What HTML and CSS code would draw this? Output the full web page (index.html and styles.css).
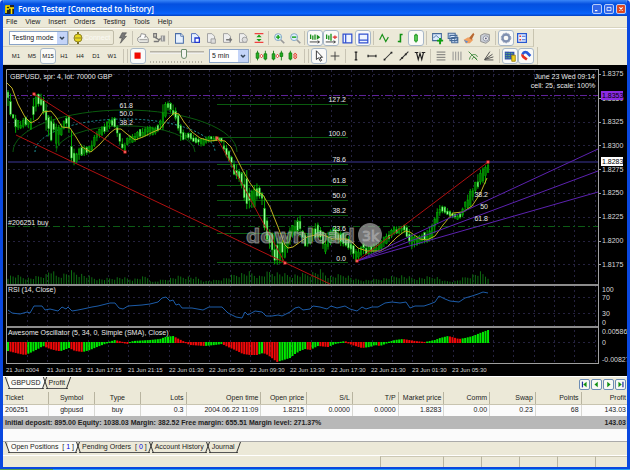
FILE: index.html
```
<!DOCTYPE html>
<html lang="en">

<head>
    <meta charset="UTF-8">
    <meta name="viewport" content="width=device-width, initial-scale=1.0">
    <title>Forex Tester [Connected to history]</title>
    <link rel="stylesheet" href="styles.css">
</head>

<body>
    <div class="window">
        <header class="titlebar">
            <svg class="logo" viewBox="0 0 9 9"><rect width="9" height="9" fill="#222"/><path d="M1 8V1h4M1 4h3M4 3h5M6.500 3v6" stroke="#ffe800" stroke-width="1.600" fill="none"/></svg>
            <h1 class="title">Forex Tester [Connected to history]</h1>
            <div class="win-btns">
                <button type="button" class="win-btn" aria-label="Minimize"><svg viewBox="0 0 10 10"><path d="M2.500 7h3" stroke="#fff" stroke-width="1.500"/></svg></button>
                <button type="button" class="win-btn" aria-label="Maximize"><svg viewBox="0 0 10 10"><path d="M2.500 3h5v4h-5z" stroke="#fff" fill="none"/></svg></button>
                <button type="button" class="win-btn close" aria-label="Close"><svg viewBox="0 0 10 10"><path d="M3 3l4 4M7 3l-4 4" stroke="#fff" stroke-width="1.400"/></svg></button>
            </div>
        </header>

        <nav class="menu">
            <button type="button">File</button>
            <button type="button">View</button>
            <button type="button">Insert</button>
            <button type="button">Orders</button>
            <button type="button">Testing</button>
            <button type="button">Tools</button>
            <button type="button">Help</button>
        </nav>

        <div class="toolbars">
            <div class="toolbar">
                <div class="combo mode">
                    <select aria-label="Mode"><option>Testing mode</option></select>
                    <svg viewBox="0 0 10 12"><path d="M3 5l2 2 2-2" stroke="#345" stroke-width="1.500" fill="none"/></svg>
                </div>
                <button type="button" class="connect" disabled>
                    <svg viewBox="0 0 12 14"><path d="M6 1v12" stroke="#776b20" stroke-width="2"/><circle cx="6" cy="7" r="4" fill="#e8d820" stroke="#91852a"/><path d="M2 7h8" stroke="#91852a"/></svg>
                    Connect
                </button>
                <button type="button" class="tool" aria-label="Quick connect"><svg viewBox="0 0 16 16"><path d="M7 2h5L9 6h3l-7 8 2-6H4z" fill="#777" stroke="#444" stroke-width=".6"/></svg></button>
                <span class="sep"></span>
                <button type="button" class="tool" aria-label="Open data"><svg viewBox="0 0 16 16"><path d="M2 8l3-2h7l2 3v4H4L2 11z" fill="#f2f2ee" stroke="#888"/><path d="M5 7l1-4 5 1-1 4M4 10h9" fill="#fff" stroke="#888"/></svg></button>
                <button type="button" class="tool" aria-label="Data feed"><svg viewBox="0 0 16 16"><path d="M2 3h3v4H2zM3 7l5 3M2 12h5l2-3h2" fill="none" stroke="#777" stroke-width="1.500"/><path d="M10 5h5v7h-5z" fill="#999"/><path d="M12 6v5" stroke="#ddd"/></svg></button>
                <span class="sep"></span>
                <button type="button" class="tool" aria-label="New chart"><svg viewBox="0 0 16 16"><path d="M4 3h6l3 3v8H4z" fill="#e6f1ff" stroke="#4a6ea8" stroke-width="1.200"/><path d="M10 3v3h3" fill="#fff" stroke="#4a6ea8"/></svg></button>
                <button type="button" class="tool" aria-label="Add chart"><svg viewBox="0 0 16 16"><path d="M4 3h5l3 3v7H4z" fill="#e6f1ff" stroke="#4060b8"/><path d="M8 8h5v5H8z" fill="#fff" stroke="#2038d0" stroke-width="1.500"/></svg></button>
                <button type="button" class="tool" aria-label="Save chart"><svg viewBox="0 0 16 16"><path d="M4 3h5l3 3v7H4z" fill="#eee" stroke="#999"/><path d="M8 9h5v5H8z" fill="#ddd" stroke="#999"/></svg></button>
                <button type="button" class="tool" aria-label="Export chart"><svg viewBox="0 0 16 16"><path d="M4 3h5l3 3v7H4z" fill="#eee" stroke="#999"/><path d="M7 10h6M11 8l2 2-2 2" fill="none" stroke="#777" stroke-width="1.500"/></svg></button>
                <button type="button" class="tool" aria-label="Delete chart"><svg viewBox="0 0 16 16"><path d="M4 3h5l3 3v7H4z" fill="#eee" stroke="#999"/><circle cx="10" cy="10" r="3" fill="#ddd" stroke="#999"/></svg></button>
                <button type="button" class="tool" aria-label="Fit height"><svg viewBox="0 0 16 16"><path d="M3 3h10M3 13h10" stroke="#f04040" stroke-width="1.300"/><path d="M8 4l3 3H5zM8 12l3-3H5z" fill="#18a018"/></svg></button>
                <span class="sep"></span>
                <button type="button" class="tool" aria-label="Zoom in"><svg viewBox="0 0 16 16"><path d="M10 10l4 4" stroke="#999" stroke-width="2"/><circle cx="7" cy="7" r="4" fill="#dfeeff" stroke="#7aa0c0"/><path d="M4.500 7h5M7 4.500v5" stroke="#10a010" stroke-width="1.600"/></svg></button>
                <button type="button" class="tool" aria-label="Zoom out"><svg viewBox="0 0 16 16"><path d="M10 10l4 4" stroke="#999" stroke-width="2"/><circle cx="7" cy="7" r="4" fill="#dfeeff" stroke="#7aa0c0"/><path d="M4.500 7h5" stroke="#10a010" stroke-width="1.600"/></svg></button>
                <span class="sep"></span>
                <button type="button" class="tool on" aria-label="Auto scroll"><svg viewBox="0 0 16 16"><path d="M3 4v5M5.500 5v5M8 4v6" stroke="#189018" stroke-width="1.500"/><path d="M10 4v6l4-3z" fill="#189018"/><path d="M2 12.500h11M11 11l2 1.500-2 1.500" stroke="#333" fill="none"/></svg></button>
                <button type="button" class="tool on" aria-label="Chart shift"><svg viewBox="0 0 16 16"><path d="M3 4v5M5.500 5v5M8 3v8" stroke="#189018" stroke-width="1.500"/><path d="M10 7h5M12.500 5v4" stroke="#e03030" stroke-width="1.400"/><path d="M2 12.500h11M11 11l2 1.500-2 1.500" stroke="#333" fill="none"/></svg></button>
                <button type="button" class="tool" aria-label="Side panel"><svg viewBox="0 0 16 16"><path d="M3.500 3.500h10v10h-10zM6.500 3v10" fill="#eef4ff" stroke="#3050d0" stroke-width="1.400"/></svg></button>
                <button type="button" class="tool on" aria-label="Bottom panel"><svg viewBox="0 0 16 16"><path d="M3.500 3.500h10v10h-10zM3 10.500h10" fill="#eef4ff" stroke="#3050d0" stroke-width="1.400"/></svg></button>
                <span class="sep loose"></span>
                <button type="button" class="tool" aria-label="Line chart"><svg viewBox="0 0 16 16"><path d="M3 10l3-6 4 8 3-5" stroke="#189018" stroke-width="1.300" fill="none"/></svg></button>
                <button type="button" class="tool" aria-label="Bar chart"><svg viewBox="0 0 16 16"><path d="M8.500 3v10M8 4h3M5.500 12h3" stroke="#109010" stroke-width="1.800"/></svg></button>
                <button type="button" class="tool on" aria-label="Candle chart"><svg viewBox="0 0 16 16"><path d="M8 3v10" stroke="#109010" stroke-width="1.300"/><path d="M6.500 4.500h3v7h-3z" fill="#60d060" stroke="#109010"/></svg></button>
                <span class="sep loose"></span>
                <button type="button" class="tool" aria-label="Add indicator"><svg viewBox="0 0 16 16"><path d="M3 3h10v8H3z" fill="#dcecff" stroke="#466a98" stroke-width="1.200"/><path d="M4 8l3-3 3 3" stroke="#466a98" fill="none"/><path d="M8 11h7M11.500 8v7" stroke="#10a010" stroke-width="2.200"/></svg></button>
                <button type="button" class="tool" aria-label="Indicator list"><svg viewBox="0 0 16 16"><g fill="#dcecff" stroke="#466a98" stroke-width="1.200"><path d="M2.500 2.500h8v6h-8zM4.500 5h8v6h-8zM6.500 7.500h7v6h-7z"/></g><path d="M10 9v4" stroke="#466a98"/></svg></button>
                <button type="button" class="tool" aria-label="Templates"><svg viewBox="0 0 16 16"><path d="M2 10l5-3 6 3-4 4H4z" fill="#f0a060"/><path d="M8 8l5-6 1 2-3 6z" fill="#b86830"/><path d="M2 10l5 2-2 2z" fill="#6090d0"/></svg></button>
                <button type="button" class="tool" aria-label="Screenshot"><svg viewBox="0 0 16 16"><path d="M3 5l4-2 6 1v7l-4 3-6-2z" fill="#ccd0d8" stroke="#888"/><circle cx="9" cy="8.500" r="3" fill="#eee" stroke="#8890a0"/><circle cx="9" cy="8.500" r="1" fill="#557"/></svg></button>
                <span class="sep loose"></span>
                <button type="button" class="tool on" aria-label="Settings"><svg viewBox="0 0 16 16"><circle cx="8" cy="8" r="4" fill="none" stroke="#8090b0" stroke-width="2.600"/><circle cx="8" cy="8" r="5.500" fill="none" stroke="#8090b0" stroke-dasharray="2 1.500"/></svg></button>
                <button type="button" class="tool" aria-label="Properties"><svg viewBox="0 0 16 16"><path d="M3 3h10v10H3z" fill="#e8f0ff" stroke="#2858d0" stroke-width="1.400"/><path d="M5 6h2M5 10h2" stroke="#e04040" stroke-width="1.800"/><path d="M8 6h4M8 10h4" stroke="#2858d0"/></svg></button>
            </div>

            <div class="toolbar">
                <button type="button" class="tool period">M1</button>
                <button type="button" class="tool period">M5</button>
                <button type="button" class="tool period on">M15</button>
                <button type="button" class="tool period">H1</button>
                <button type="button" class="tool period">H4</button>
                <button type="button" class="tool period">D1</button>
                <button type="button" class="tool period">W1</button>
                <span class="sep wide"></span>
                <button type="button" class="tool on" aria-label="Stop test"><svg viewBox="0 0 16 16"><path d="M4 4h7v7H4z" fill="#f00800"/></svg></button>
                <input type="range" class="speed" min="0" max="100" value="65" aria-label="Test speed">
                <div class="combo step">
                    <select aria-label="Step"><option>5 min</option></select>
                    <svg viewBox="0 0 10 12"><path d="M3 5l2 2 2-2" stroke="#345" stroke-width="1.500" fill="none"/></svg>
                </div>
                <span class="sep"></span>
                <button type="button" class="tool" aria-label="One bar back"><svg viewBox="0 0 16 16"><path d="M4 2v11M13 2v11" stroke="#108010"/><path d="M2.500 4.500h3v6h-3zM11.500 5.500h3v6h-3z" fill="#20b020" stroke="#108010"/><path d="M8.500 6l2 2-2 2-2-2z" fill="#fff" stroke="#e02020"/></svg></button>
                <button type="button" class="tool" aria-label="One bar forward"><svg viewBox="0 0 16 16"><path d="M4 2v11M13 2v11" stroke="#108010"/><path d="M2.500 5.500h3v6h-3zM11.500 4.500h3v4h-3z" fill="#20b020" stroke="#108010"/><path d="M8.500 6l2 2-2 2-2-2z" fill="#fff" stroke="#e02020"/></svg></button>
                <button type="button" class="tool" aria-label="Change price"><svg viewBox="0 0 16 16"><path d="M5 2v11" stroke="#108010"/><path d="M3.500 4.500h3v7h-3z" fill="#20b020" stroke="#108010"/><path d="M8.500 7l2-2.500 2 2.500zM8.500 9l2 2.500 2-2.500z" fill="#fff" stroke="#e03020"/></svg></button>
                <span class="sep wide"></span>
                <button type="button" class="tool on" aria-label="Pointer"><svg viewBox="0 0 16 16"><path d="M5 2v10l2.500-2 2 4 1.500-1-2-3.500h3z" fill="#fff" stroke="#222"/></svg></button>
                <button type="button" class="tool" aria-label="Crosshair"><svg viewBox="0 0 16 16"><path d="M3 8h10M8 3v10" stroke="#333"/></svg></button>
                <span class="sep loose"></span>
                <button type="button" class="tool" aria-label="Vertical line"><svg viewBox="0 0 16 16"><path d="M8 3v10M6.500 3.500h3M6.500 12.500h3" stroke="#222" stroke-width="1.400"/></svg></button>
                <button type="button" class="tool" aria-label="Horizontal line"><svg viewBox="0 0 16 16"><path d="M3 8h10M3.500 6.500v3M12.500 6.500v3" stroke="#222" stroke-width="1.400"/></svg></button>
                <button type="button" class="tool" aria-label="Trend line"><svg viewBox="0 0 16 16"><path d="M4 12l8-8" stroke="#333" stroke-width="1.200"/><path d="M3 11h2v2H3zM11 3h2v2h-2z" fill="#222"/></svg></button>
                <button type="button" class="tool" aria-label="Ray"><svg viewBox="0 0 16 16"><path d="M3 13L13 3" stroke="#333" stroke-width="1.200"/><path d="M5 9h2v2H5zM9 5h2v2H9z" fill="#222"/></svg></button>
                <button type="button" class="tool" aria-label="Wave line"><svg viewBox="0 0 16 16"><path d="M2 4h4M10 4h4M4 4l2 8 2-7 2 7 2-8" stroke="#222" stroke-width="1.300" fill="none"/></svg></button>
                <span class="sep loose"></span>
                <button type="button" class="tool" aria-label="Fibonacci retracement"><svg viewBox="0 0 16 16"><path d="M3 3.500h10M3 6.500h10M3 9.500h10M3 12.500h10" stroke="#666"/></svg></button>
                <button type="button" class="tool" aria-label="Fibonacci time"><svg viewBox="0 0 16 16"><path d="M3.500 3v10M6.500 3v10M9.500 3v10M12.500 3v10" stroke="#888"/></svg></button>
                <button type="button" class="tool" aria-label="Fibonacci arc"><svg viewBox="0 0 16 16"><path d="M3 3l10 10M4 12c1-7 8-7 9-3M7 12c1-4 4-3 5 0" stroke="#308030" fill="none"/></svg></button>
                <button type="button" class="tool" aria-label="Fibonacci fan"><svg viewBox="0 0 16 16"><path d="M3 12.500h10M3 12l10-3M3 12l9-6M3 12l6-9" stroke="#444" fill="none"/></svg></button>
                <span class="sep loose"></span>
                <button type="button" class="tool on" aria-label="Data window"><svg viewBox="0 0 16 16"><path d="M2 3h11v9H2z" fill="#3050b0"/><path d="M3 5h9M3 7.500h9M3 10h9" stroke="#60c060" stroke-dasharray="2 1"/><path d="M10 7h4v7h-4z" fill="#f0d020" stroke="#988010"/></svg></button>
                <button type="button" class="tool on" aria-label="Magnet"><svg viewBox="0 0 16 16"><path d="M9 12L5 9a3 3 0 0 1-1-3" stroke="#e83020" stroke-width="3" fill="none"/><path d="M4 6a4 4 0 0 1 5-2l4 4" stroke="#2858d8" stroke-width="3" fill="none"/></svg></button>
            </div>
        </div>

        <main class="chart-area">
            <svg id="chart" class="chart" viewBox="3 65 624 311" role="img" aria-label="GBPUSD M15 chart">
                <g id="grid" class="grid"></g>

                <!-- frame and panel borders -->
                <path class="frame" d="M6.500 364V69.500H599"/>
                <path class="divider" d="M7 285H599M7 327H599"/>
                <path class="frame" d="M7 363.500H599M598.500 69V364"/>

                <!-- price levels -->
                <path d="M8 95.500H598" stroke="#5e2299" stroke-dasharray="7 2 2 2"/>
                <path d="M8 162H598" stroke="#1e1b4c" stroke-width="2"/>
                <path d="M8 226.500H598" stroke="#0c5c14" stroke-dasharray="7 3 2 3"/>

                <g id="volume" class="volume"></g>

                <!-- fibonacci arcs -->
                <path class="arc" d="M13 152A112 42 0 0 1 237 152"/>
                <path class="arc-mid" d="M35 152A90 33 0 0 1 215 152"/>
                <path class="arc" d="M56 152A69 26 0 0 1 195 152"/>

                <!-- fibonacci levels -->
                <path class="fib" d="M217 104.500H348M217 137.500H348M217 164.500H348M217 185.500H348M217 200.500H348M217 215.500H348M217 233.500H348M217 262.500H348"/>

                <g id="candles"></g>
                <polyline id="average" class="average"/>

                <!-- fibonacci fan and trend lines -->
                <path class="fan" d="M357 261L598 149M357 261L598 171M357 261L598 192"/>
                <path class="trend" d="M34 94L125 152M16 135L330 284M217 138L285 263M357 261L488 162"/>
                <g id="anchors" class="anchors"></g>

                <g class="watermark">
                    <circle cx="370" cy="235" r="12"/>
                    <text class="mark" x="246" y="243">download</text>
                    <text class="mark-num" x="362" y="241">3k</text>
                </g>

                <g class="label">
                    <text x="10" y="79">GBPUSD, spr: 4, lot: 70000 GBP</text>
                    <text x="8" y="225">#206251 buy</text>
                    <text x="8" y="292">RSI (14, Close)</text>
                    <text x="8" y="335">Awesome Oscillator (5, 34, 0, Simple (SMA), Close)</text>
                </g>
                <g class="label end">
                    <text x="595" y="79">June 23 Wed 09:14</text>
                    <text x="595" y="88">cell: 25, scale: 100%</text>
                    <text x="346" y="102">127.2</text>
                    <text x="346" y="136">100.0</text>
                    <text x="346" y="162">78.6</text>
                    <text x="346" y="183">61.8</text>
                    <text x="346" y="198">50.0</text>
                    <text x="346" y="213">38.2</text>
                    <text x="346" y="231">23.6</text>
                    <text x="346" y="261">0.0</text>
                    <text x="133" y="108">61.8</text>
                    <text x="133" y="116">50.0</text>
                    <text x="133" y="125">38.2</text>
                    <text x="488" y="197">38.2</text>
                    <text x="488" y="209">50</text>
                    <text x="488" y="221">61.8</text>
                </g>

                <polyline id="rsi" class="rsi"/>
                <g id="oscillator"></g>

                <g class="scale">
                    <text x="602" y="76">1.8375</text>
                    <text x="602" y="101">1.8350</text>
                    <text x="602" y="124">1.8325</text>
                    <text x="602" y="148">1.8300</text>
                    <text x="602" y="172">1.8275</text>
                    <text x="602" y="195">1.8250</text>
                    <text x="602" y="219">1.8225</text>
                    <text x="602" y="243">1.8200</text>
                    <text x="602" y="267">1.8175</text>
                    <text x="602" y="292">100</text>
                    <text x="602" y="300">70</text>
                    <text x="602" y="316">30</text>
                    <text x="602" y="325">0</text>
                    <text x="602" y="334">0.00586</text>
                    <text x="602" y="345">0</text>
                    <text x="602" y="362">-0.00827</text>
                </g>
                <rect x="601" y="91" width="22" height="9" fill="#8a2be2"/>
                <text class="tag" x="602" y="98">1.8353</text>
                <rect x="601" y="157" width="22" height="9" fill="#fff"/>
                <text class="tag" x="602" y="164">1.8283</text>

                <g class="time">
                    <text x="6" y="372">21 Jun 2004</text>
                    <text x="47" y="372">21 Jun 13:15</text>
                    <text x="87" y="372">21 Jun 17:15</text>
                    <text x="128" y="372">21 Jun 21:15</text>
                    <text x="169" y="372">22 Jun 01:30</text>
                    <text x="209" y="372">22 Jun 05:30</text>
                    <text x="250" y="372">22 Jun 09:30</text>
                    <text x="290" y="372">22 Jun 13:30</text>
                    <text x="331" y="372">22 Jun 17:30</text>
                    <text x="371" y="372">22 Jun 21:30</text>
                    <text x="412" y="372">23 Jun 01:30</text>
                    <text x="452" y="372">23 Jun 05:30</text>
                </g>
            </svg>
        </main>

        <div class="chart-tabs">
            <div class="tabs">
                <button type="button" class="tab active">GBPUSD</button>
                <button type="button" class="tab">Profit</button>
            </div>
            <div class="pager">
                <button type="button" aria-label="First"><svg viewBox="0 0 11 11"><path d="M3 2v7" stroke="#2030a0" stroke-width="1.500"/><path d="M8 2v7L4 5.500z" fill="#109010"/></svg></button>
                <button type="button" aria-label="Previous"><svg viewBox="0 0 11 11"><path d="M7 2v7L3 5.500z" fill="#109010"/></svg></button>
                <button type="button" aria-label="Next"><svg viewBox="0 0 11 11"><path d="M4 2v7l4-3.500z" fill="#109010"/></svg></button>
                <button type="button" aria-label="Last"><svg viewBox="0 0 11 11"><path d="M8.500 2v7" stroke="#2030a0" stroke-width="1.500"/><path d="M3 2v7l4-3.500z" fill="#109010"/></svg></button>
            </div>
        </div>

        <div class="positions">
            <table>
                <colgroup>
                    <col span="4">
                    <col class="big">
                    <col span="8">
                </colgroup>
                <thead>
                    <tr>
                        <th class="left">Ticket</th>
                        <th class="center">Symbol</th>
                        <th class="center">Type</th>
                        <th>Lots</th>
                        <th>Open time</th>
                        <th>Open price</th>
                        <th>S/L</th>
                        <th>T/P</th>
                        <th>Market price</th>
                        <th>Comm</th>
                        <th>Swap</th>
                        <th>Points</th>
                        <th>Profit</th>
                    </tr>
                </thead>
                <tbody>
                    <tr>
                        <td class="left">206251</td>
                        <td class="center">gbpusd</td>
                        <td class="center">buy</td>
                        <td>0.3</td>
                        <td>2004.06.22 11:09</td>
                        <td>1.8215</td>
                        <td>0.0000</td>
                        <td>0.0000</td>
                        <td>1.8283</td>
                        <td>0.00</td>
                        <td>0.23</td>
                        <td>68</td>
                        <td>143.03</td>
                    </tr>
                </tbody>
                <tfoot>
                    <tr>
                        <td colspan="12" class="left">Initial deposit: 895.00 Equity: 1038.03 Margin: 382.52 Free margin: 655.51 Margin level: 271.37%</td>
                        <td>143.03</td>
                    </tr>
                </tfoot>
            </table>
        </div>

        <div class="tabs bottom-tabs">
            <button type="button" class="tab active">Open Positions&nbsp; [ <b>1</b> ]</button>
            <button type="button" class="tab">Pending Orders&nbsp; [ <b>0</b> ]</button>
            <button type="button" class="tab">Account History</button>
            <button type="button" class="tab">Journal</button>
        </div>

        <footer class="status">
            <span class="rest"></span>
            <span class="first"></span>
            <span></span>
            <span></span>
            <span></span>
            <span></span>
            <span class="last"></span>
        </footer>
    </div>
    <div class="taskbar"><span class="start"></span></div>

    <script src="chart.js"></script>
</body>

</html>
```

FILE: styles.css
```
* {
    box-sizing: border-box;
}

body {
    background-color: #d8e4f8;
    color: #222;
    margin: 0;
    min-height: 100vh;
    display: flex;
    flex-direction: column;
    font-family: "Liberation Sans", Arial, sans-serif;
    font-size: 7px;
    line-height: 10px;
}

button,
select {
    font: inherit;
    color: inherit;
    margin: 0;
    padding: 0;
    border: none;
    background: none;
}

svg {
    display: block;
}

.window {
    flex-grow: 1;
    display: flex;
    flex-direction: column;
    border: 3px solid #0a48e0;
    border-top: none;
    border-bottom-width: 2px;
    border-radius: 4px 4px 0 0;
    background-color: #ece9d8;
    overflow: hidden;
}

/* title */
.titlebar {
    height: 16px;
    display: flex;
    align-items: center;
    gap: 4px;
    padding: 2px 1px 0 2px;
    background: linear-gradient(#3a86f8, #0450e0 25%, #0458ea 60%, #0a64fc 85%, #0340c0);
}

.logo {
    width: 9px;
    height: 9px;
}

.title {
    flex-grow: 1;
    margin: 0;
    color: #fff;
    font-family: "Open Sans", "Noto Sans", sans-serif;
    font-size: 8px;
    font-weight: 600;
}

.win-btns {
    display: flex;
    gap: 2px;
}

.win-btn {
    width: 10px;
    height: 10px;
    border: 1px solid #b8ccf8;
    border-radius: 2px;
    background-color: #3468e8;
}

.win-btn.close {
    background-color: #e04820;
}

.menu {
    height: 12px;
    display: flex;
    align-items: center;
    gap: 8px;
    padding: 0 3px;
    border-bottom: 1px solid #d8d4c0;
}

/* toolbars */
.toolbars {
    border-top: 1px solid #fff;
}

.toolbar {
    height: 18px;
    width: max-content;
    display: flex;
    align-items: center;
    padding: 0 3px 0 5px;
    border-right: 1px solid #c8c4b0;
    border-bottom: 1px solid #d4d0bc;
}

.tool {
    width: 16px;
    height: 16px;
    padding: 0;
    border: 1px solid transparent;
    border-radius: 3px;
}

.tool.on {
    background-color: #fafaf8;
    border-color: #a8b8c8;
}

.period {
    font-size: 6px;
}

.sep {
    width: 1px;
    height: 14px;
    margin: 0 2px 0 1px;
    background-color: #c8c4b4;
}

.sep.loose {
    margin: 0 2px;
}

.sep.wide {
    width: 5px;
    margin: 0 2px 0 3px;
    border: 1px solid #c8c4b4;
    border-width: 0 1px;
    background: none;
}

.combo {
    display: grid;
    align-items: center;
    height: 14px;
    border: 1px solid #8aa4c8;
    background-color: #fff;
}

.combo select,
.combo svg {
    grid-area: 1 / 1;
}

.combo select {
    appearance: none;
    height: 12px;
    padding-left: 2px;
}

.combo svg {
    justify-self: end;
    width: 10px;
    height: 12px;
    background-color: #c4d4f8;
    pointer-events: none;
}

.mode {
    width: 59px;
    margin-left: 1px;
}

.step {
    width: 40px;
}

.connect {
    display: flex;
    align-items: center;
    width: 46px;
    height: 15px;
    padding-left: 3px;
    margin-right: 1px;
    border: 1px solid #c0bca8;
    border-radius: 2px;
    color: #fbfaf4;
}

.connect svg {
    width: 12px;
    height: 14px;
}

.speed {
    appearance: none;
    width: 54px;
    height: 15px;
    margin: 0 5px 0 4px;
    background:
        repeating-linear-gradient(90deg, #b8b4a4 0 1px, transparent 1px 3px) 0 13px / 100% 2px no-repeat,
        linear-gradient(#a8a494, #fff) 0 3px / 100% 3px no-repeat;
}

.speed::-webkit-slider-thumb {
    appearance: none;
    width: 6px;
    height: 10px;
    margin-top: -3px;
    border: 1px solid #6c8c6c;
    border-radius: 1px 1px 3px 3px;
    background-color: #f4f4f0;
}

/* chart */
.chart-area {
    background-color: #000;
}

.chart {
    width: 100%;
    height: auto;
    font-family: "Liberation Sans", Arial, sans-serif;
    font-size: 7px;
}

.chart path,
.chart polyline {
    fill: none;
}

.grid {
    stroke: #25223f;
    stroke-dasharray: 2 3;
}

.frame {
    stroke: #a0a0a0;
}

.divider {
    stroke: #8c8c8c;
    stroke-width: 2;
}

.volume {
    stroke: #0e6c12;
}

.arc,
.fib {
    stroke: #0a5a0e;
}

.arc-mid {
    stroke: #209aa0;
    stroke-dasharray: 2 2;
}

.average {
    stroke: #c0b020;
}

.fan {
    stroke: #5c22b0;
}

.trend {
    stroke: #b01010;
}

.anchors {
    fill: #fff;
    stroke: #f02020;
}

.up {
    stroke: #00a800;
    fill: #007800;
}

.down {
    stroke: #10c010;
    fill: #a0ffa0;
}

.rsi {
    stroke: #1c5ca8;
}

.label {
    fill: #e8e8e8;
}

.end {
    text-anchor: end;
}

.scale {
    fill: #d8d8d8;
}

.tag {
    fill: #000;
}

.time {
    fill: #d8d8d8;
    font-size: 6px;
}

.watermark {
    fill: #a8a8a8;
    fill-opacity: .45;
    stroke: #b4b4b4;
    stroke-opacity: .6;
}

.watermark circle {
    fill-opacity: .7;
    stroke: none;
}

.mark {
    font-family: "DejaVu Sans", sans-serif;
    font-size: 20px;
    font-weight: bold;
}

.mark-num {
    font-family: "DejaVu Sans", sans-serif;
    font-size: 14px;
}

/* tabs */
.chart-tabs {
    display: flex;
    justify-content: space-between;
    height: 16px;
    padding-right: 1px;
    border-top: 1px solid #fff;
}

.tabs {
    display: flex;
    align-items: flex-start;
    gap: 2px;
    padding-left: 5px;
}

.tab {
    position: relative;
    height: 12px;
    padding: 0 3px;
    border-bottom: 1px solid #555;
}

.tab.active {
    background-color: #fbfbf8;
}

/* slanted sides */
.tab::before,
.tab::after {
    content: "";
    position: absolute;
    top: 0;
    bottom: -1px;
    width: 1px;
    background-color: #333;
}

.tab::before {
    left: -1px;
    transform: skewX(20deg);
}

.tab::after {
    right: -1px;
    transform: skewX(-20deg);
}

.tab b {
    color: #0000e0;
    font-weight: normal;
}

.pager {
    display: flex;
    align-items: center;
    gap: 1px;
}

.pager button {
    width: 11px;
    height: 11px;
    border: 1px solid #6c8cb4;
    border-radius: 2px;
    background-color: #f8f8f4;
}

/* positions */
.positions {
    flex-grow: 1;
    min-height: 50px;
    background-color: #fbfbfb;
    border-bottom: 1px solid #aaa;
}

table {
    width: 100%;
    border-collapse: collapse;
    table-layout: fixed;
}

.big {
    width: 12%;
}

th,
td {
    height: 12px;
    padding: 0 2px;
    text-align: right;
    white-space: nowrap;
    border-right: 1px solid #d8d8d4;
}

th {
    background-color: #ece9d8;
    font-weight: normal;
    border-right-color: #b8b4a0;
    border-bottom: 1px solid #c8c4b0;
}

th:last-child,
td:last-child {
    padding-right: 1px;
    border-right: none;
}

.left {
    text-align: left;
}

.center {
    text-align: center;
}

tfoot td {
    background-color: #b8b8b8;
    border: none;
    font-weight: bold;
    height: 13px;
}

.bottom-tabs {
    height: 13px;
}

.bottom-tabs .tab {
    height: 11px;
}

.status {
    display: flex;
    height: 12px;
    border-top: 1px solid #fff;
}

.status span {
    width: 38px;
    border-left: 1px solid #b8b4a0;
    border-top: 1px solid #ccc8b4;
}

.status .first {
    width: 63px;
}

.status .last {
    width: 32px;
}

.status .rest {
    flex-grow: 1;
    border: none;
}

.taskbar {
    height: 1px;
    background-color: #28a0f0;
}

.start {
    display: block;
    width: 53px;
    height: 1px;
    background-color: #50a050;
}
```

FILE: chart.js
```
const SVG = 'http://www.w3.org/2000/svg';
const FIRST = 8;
const BARS = 190;
const STEP = 2.54;

// x, high, low
const prices = [
    [8, 90, 106], [10, 89, 116], [13, 114, 118], [16, 115, 135], [19, 122, 128], [22, 120, 130], [25, 115, 126], [28, 120, 128],
    [31, 118, 130], [34, 93, 118], [37, 95, 108], [40, 92, 105], [43, 97, 108], [45, 97, 131], [48, 115, 130], [50, 115, 150],
    [53, 118, 128], [57, 125, 153], [60, 125, 140], [63, 122, 131], [66, 116, 126], [69, 115, 133], [72, 133, 168], [75, 156, 164],
    [78, 150, 162], [81, 144, 156], [85, 146, 156], [90, 146, 153], [93, 137, 150], [97, 131, 141], [100, 128, 137], [107, 121, 132],
    [112, 117, 126], [115, 117, 128], [118, 128, 140], [121, 136, 148], [125, 143, 152], [128, 136, 144], [135, 133, 142], [140, 129, 138],
    [148, 126, 136], [155, 127, 135], [160, 122, 130], [163, 104, 130], [167, 101, 110], [170, 102, 112], [175, 106, 118], [178, 113, 130],
    [181, 125, 142], [185, 133, 139], [190, 132, 140], [195, 136, 143], [202, 139, 147], [207, 136, 143], [216, 136, 141], [222, 138, 143],
    [225, 142, 155], [228, 148, 160], [231, 155, 166], [235, 162, 178], [238, 167, 180], [241, 172, 185], [244, 172, 200], [247, 170, 210],
    [250, 193, 208], [255, 184, 208], [258, 183, 195], [262, 192, 205], [265, 197, 235], [268, 226, 245], [271, 232, 252], [274, 233, 264],
    [278, 239, 265], [282, 240, 262], [286, 243, 257], [289, 228, 248], [292, 226, 238], [295, 220, 236], [298, 217, 233], [300, 215, 237],
    [303, 232, 243], [306, 233, 248], [310, 234, 245], [314, 225, 240], [317, 221, 237], [321, 228, 243], [325, 234, 255], [330, 230, 246],
    [335, 225, 239], [340, 231, 246], [347, 234, 247], [352, 242, 257], [356, 249, 262], [360, 248, 258], [363, 242, 254], [368, 246, 255],
    [375, 243, 253], [380, 242, 251], [385, 235, 246], [390, 230, 240], [395, 226, 234], [400, 227, 234], [405, 224, 233], [408, 226, 240],
    [411, 233, 250], [415, 236, 247], [420, 235, 244], [427, 230, 243], [432, 224, 240], [436, 214, 230], [438, 205, 220], [441, 205, 213],
    [446, 207, 214], [452, 212, 218], [458, 215, 220], [463, 207, 217], [466, 199, 210], [470, 189, 208], [473, 188, 200], [476, 180, 192],
    [479, 171, 187], [482, 168, 182], [485, 166, 186], [488, 162, 173]
];

const average = [
    [7, 83], [12, 88], [18, 104], [25, 117], [31, 123], [38, 119], [43, 112], [51, 111], [56, 117], [62, 127], [70, 128], [76, 137],
    [82, 147], [91, 152], [100, 144], [110, 133], [115, 129], [121, 129], [127, 134], [135, 140], [143, 137], [153, 132], [160, 129],
    [167, 120], [174, 113], [179, 114], [184, 122], [192, 132], [200, 138], [210, 141], [218, 140], [225, 141], [231, 147], [236, 157],
    [243, 171], [250, 183], [255, 190], [263, 195], [270, 207], [278, 227], [285, 245], [288, 248], [293, 247], [300, 242], [307, 237],
    [315, 235], [323, 235], [333, 239], [347, 239], [352, 242], [358, 248], [367, 251], [380, 251], [387, 247], [397, 237], [405, 231],
    [410, 232], [420, 239], [427, 240], [435, 236], [443, 225], [453, 213], [463, 212], [472, 206], [480, 194], [487, 178]
];

const rsi = [
    [8, 310], [12, 313], [20, 314], [27, 312], [30, 313], [34, 306], [42, 306], [45, 310], [50, 309], [58, 311], [62, 307], [66, 309],
    [68, 307], [72, 311], [78, 310], [83, 309], [92, 307], [98, 306], [110, 303], [115, 303], [119, 308], [123, 309], [128, 306], [142, 305],
    [150, 304], [158, 302], [162, 298], [166, 297], [170, 301], [173, 300], [176, 305], [179, 304], [182, 308], [192, 308], [203, 310],
    [209, 307], [222, 307], [228, 313], [236, 317], [242, 318], [245, 312], [248, 315], [255, 311], [262, 312], [266, 316], [272, 316],
    [278, 315], [282, 316], [290, 312], [295, 308], [299, 307], [303, 310], [310, 309], [313, 306], [320, 307], [327, 309], [331, 306],
    [337, 308], [345, 306], [350, 309], [357, 311], [362, 307], [366, 309], [372, 307], [378, 307], [385, 303], [392, 302], [400, 303],
    [406, 302], [410, 308], [415, 306], [424, 306], [430, 304], [435, 302], [439, 296], [445, 299], [450, 301], [459, 302], [465, 298],
    [472, 296], [478, 294], [483, 292], [488, 293]
];

const oscillator = [
    [8, 350], [20, 353], [25, 354], [30, 352], [38, 348], [43, 345], [50, 348], [58, 350], [61, 350], [69, 347], [75, 350], [83, 351],
    [90, 349], [97, 346], [105, 343], [115, 340], [127, 343], [133, 341], [150, 340], [160, 339], [165, 337], [173, 336], [183, 341], [190, 344],
    [205, 345], [215, 344], [222, 343], [228, 346], [235, 349], [243, 353], [250, 354], [257, 354], [263, 352], [268, 354], [277, 361],
    [290, 357], [295, 353], [300, 350], [305, 348], [310, 349], [318, 345], [328, 346], [335, 343], [345, 341], [352, 344], [362, 347],
    [370, 346], [375, 344], [380, 345], [388, 342], [395, 340], [403, 339], [415, 341], [425, 342], [435, 340], [440, 338], [448, 336],
    [452, 337], [459, 339], [465, 338], [473, 336], [480, 333], [488, 330]
];

const volume = [
    [8, 8], [15, 9], [30, 6], [47, 10], [50, 16], [57, 8], [72, 13], [85, 9], [100, 5], [120, 7], [133, 5], [147, 8], [152, 2], [165, 5],
    [180, 8], [195, 7], [205, 3], [215, 4], [225, 6], [235, 10], [250, 12], [260, 8], [270, 13], [290, 9], [310, 11], [320, 14], [330, 8],
    [345, 10], [355, 5], [365, 4], [385, 6], [400, 9], [415, 6], [435, 8], [445, 3], [455, 3], [465, 7], [480, 12], [488, 8]
];

const anchors = [[34, 94], [125, 152], [217, 138], [285, 263], [357, 261], [488, 162]];

function add(parent, tag, attrs) {
    const el = document.createElementNS(SVG, tag);
    for (const key in attrs) {
        el.setAttribute(key, attrs[key]);
    }
    parent.appendChild(el);
}

function line(parent, x1, y1, x2, y2, attrs) {
    add(parent, 'line', { x1, y1, x2, y2, ...attrs });
}

// value of column col at x
function valueAt(points, x, col) {
    for (let i = 1; i < points.length; i++) {
        const a = points[i - 1];
        const b = points[i];
        if (x <= b[0]) {
            const t = Math.max(0, (x - a[0]) / (b[0] - a[0]));
            return a[col] + (b[col] - a[col]) * t;
        }
    }
    return points[points.length - 1][col];
}

function drawGrid() {
    const grid = document.querySelector('#grid');
    for (let i = 0; i < 29; i++) {
        const x = Math.round(27 + i * 20.27) + 0.5;
        line(grid, x, 70, x, 363);
    }
    for (let i = 0; i < 9; i++) {
        const y = Math.round(74 + i * 23.8) + 0.5;
        line(grid, 8, y, 598, y);
        line(grid, 598, y, 601, y, { stroke: '#a0a0a0', 'stroke-dasharray': 'none' });
    }
    [297.5, 313.5, 342.5].forEach(y => line(grid, 8, y, 598, y));
}

function drawBars() {
    const candles = document.querySelector('#candles');
    const volumes = document.querySelector('#volume');
    const osc = document.querySelector('#oscillator');
    let last = 351;

    for (let i = 0; i < BARS; i++) {
        const x = FIRST + i * STEP;
        const high = valueAt(prices, x, 1);
        const low = valueAt(prices, x, 2);
        const next = (valueAt(prices, x + 3, 1) + valueAt(prices, x + 3, 2)) / 2;
        const falling = next > (high + low) / 2 || i % 7 === 3;
        const body = (low - high) * (0.35 + (i * 7 % 5) / 10);
        const top = high + (low - high - body) * ((i * 3 % 4) + 1) / 5;

        line(candles, x, high, x, low, { class: 'up' });
        add(candles, 'rect', {
            x: x - 0.8, y: top, width: 1.6, height: Math.max(body, 1),
            class: falling ? 'down' : 'up', 'stroke-width': 0.5
        });

        const vol = valueAt(volume, x, 1) * (0.65 + (i * 5 % 7) / 14);
        line(volumes, x, 284, x, 284 - vol);

        const value = valueAt(oscillator, x, 1);
        add(osc, 'rect', {
            x: x - 1, y: Math.min(value, 342), width: 2, height: Math.abs(value - 342) + 1,
            fill: value < last ? '#00e800' : '#f00808'
        });
        last = value;
    }
}

drawGrid();
drawBars();
document.querySelector('#average').setAttribute('points', average.join(' '));
document.querySelector('#rsi').setAttribute('points', rsi.join(' '));
anchors.forEach(([x, y]) => {
    add(document.querySelector('#anchors'), 'rect', { x: x - 1, y: y - 1, width: 2, height: 2 });
});
```
